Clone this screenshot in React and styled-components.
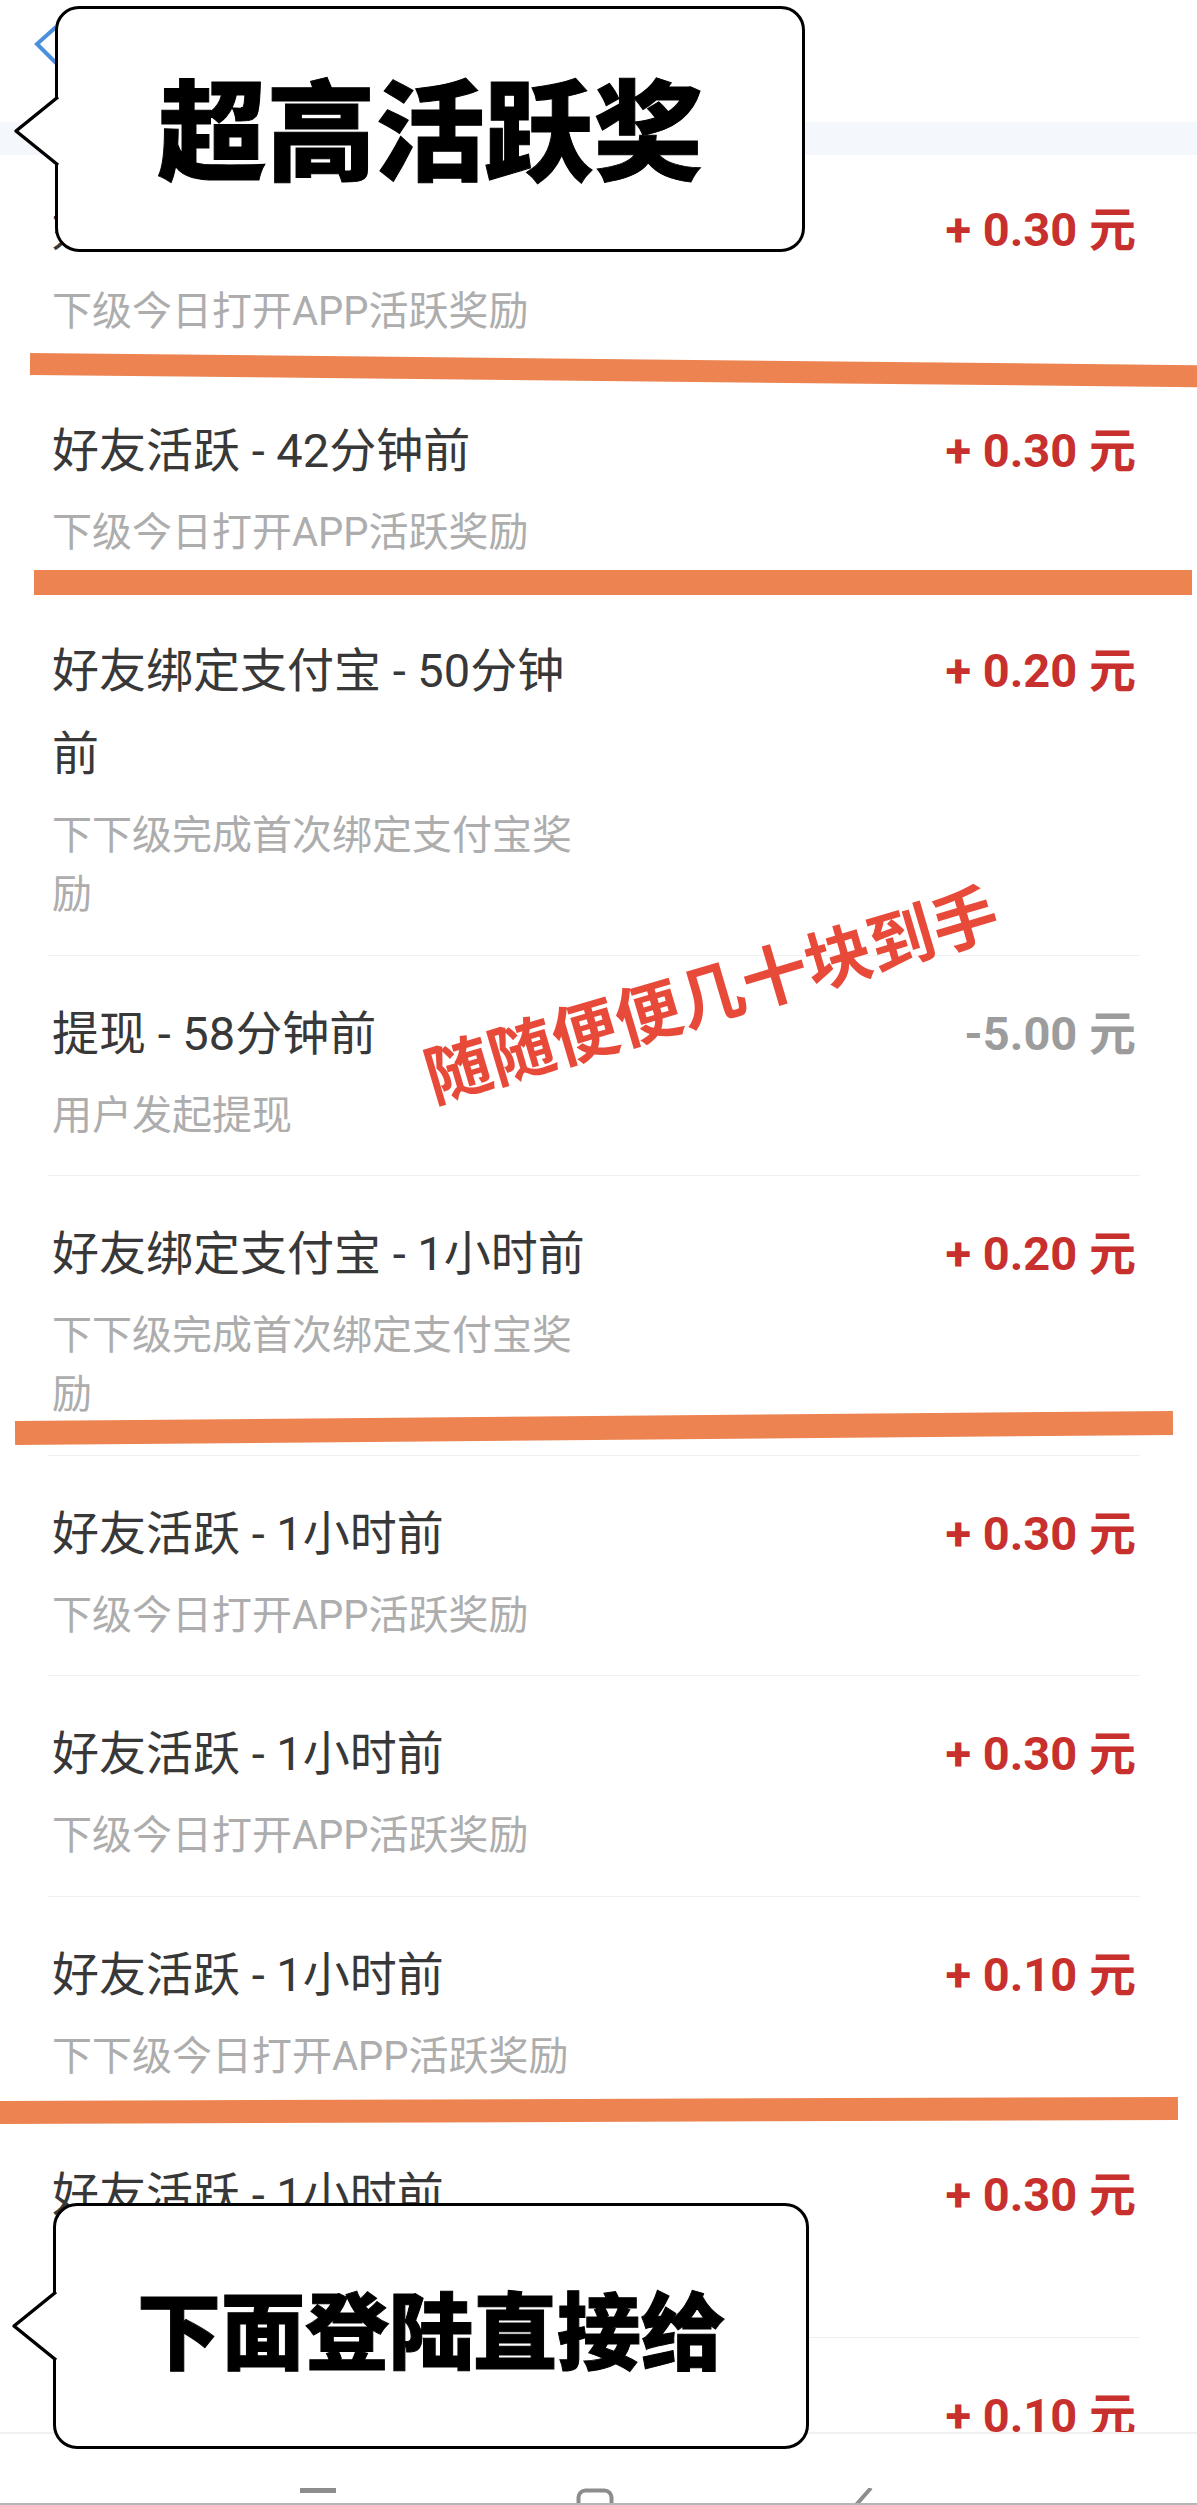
import React from 'react';
import styled, { createGlobalStyle } from 'styled-components';

const Global = createGlobalStyle`
  html, body { margin: 0; padding: 0; background: #fff; }
  * { box-sizing: border-box; }
`;

const Page = styled.div`
  position: relative;
  width: 1197px;
  height: 2505px;
  overflow: hidden;
  background: #fff;
  display: flex;
  flex-direction: column;
  font-family: Roboto, "Noto Sans CJK SC", sans-serif;
`;

const Header = styled.header`
  flex: 0 0 122px;
  padding: 25px 0 0 34px;
  background: #fff;
`;

const Band = styled.div`
  flex: 0 0 33px;
  background: #f4f7fb;
`;

const List = styled.main`
  flex: 0 0 2279px;
  overflow: hidden;
  padding: 0 57px 0 48px;
  border-bottom: 2px solid #f1f1f1;
`;

const Row = styled.article`
  display: flex;
  justify-content: space-between;
  align-items: flex-start;
  padding: 36px 0 30.5px 4px;
  border-bottom: 1px solid #f0f0f0;
  &:first-child { padding-top: 33px; }
`;

const Left = styled.div`
  width: 540px;
  display: flex;
  flex-direction: column;
  gap: 11px;
`;

const Title = styled.div`
  font-size: 47px;
  line-height: 83px;
  color: #383838;
`;

const Sub = styled.div`
  font-size: 40px;
  line-height: 59px;
  color: #adadad;
`;

const Amount = styled.div`
  font-size: 47px;
  line-height: 83px;
  font-weight: 700;
  white-space: nowrap;
  margin-right: 4px;
  color: ${p => (p.$negative ? '#9c9c9c' : '#c7302d')};
`;

const Nav = styled.nav`
  flex: 1;
  display: flex;
  align-items: flex-start;
  gap: 240px;
  padding: 54px 0 0 300px;
  background: #fff;
  overflow: hidden;
  border-bottom: 2px solid #b5b5b5;
`;

const Stroke = styled.div`
  position: absolute;
  left: ${p => p.$x}px;
  top: ${p => p.$y}px;
  width: ${p => p.$w}px;
  height: ${p => p.$h}px;
  background: #ec8350;
  transform-origin: left center;
  transform: rotate(${p => p.$tilt}deg);
`;

const Callout = styled.aside`
  position: absolute;
  left: ${p => p.$x}px;
  top: ${p => p.$y}px;
  width: ${p => p.$w}px;
  height: ${p => p.$h}px;
  background: #fff;
  border: 3px solid #000;
  border-radius: 24px;
  display: flex;
  align-items: center;
  justify-content: center;
`;

const CalloutText = styled.span`
  font-family: "Noto Sans CJK SC", sans-serif;
  font-weight: 900;
  color: #000;
  white-space: nowrap;
  font-size: ${p => p.$size}px;
  -webkit-text-stroke: 1px #000;
  transform: translateY(${p => p.$shift}px);
`;

const Tail = styled.svg`
  position: absolute;
  left: -45px;
  top: ${p => p.$top}px;
  width: 47px;
  overflow: visible;
`;

const Stamp = styled.div`
  position: absolute;
  left: 710px;
  top: 990px;
  transform: translate(-50%, -50%) rotate(-16.5deg);
  font-family: "Noto Sans CJK SC", sans-serif;
  font-weight: 700;
  font-size: 66px;
  line-height: 1;
  white-space: nowrap;
  color: #e84a3a;
`;

const rows = [
  ['好友活跃 - 36分钟前', '下级今日打开APP活跃奖励', '+ 0.30 元'],
  ['好友活跃 - 42分钟前', '下级今日打开APP活跃奖励', '+ 0.30 元'],
  ['好友绑定支付宝 - 50分钟前', '下下级完成首次绑定支付宝奖励', '+ 0.20 元'],
  ['提现 - 58分钟前', '用户发起提现', '-5.00 元', true],
  ['好友绑定支付宝 - 1小时前', '下下级完成首次绑定支付宝奖励', '+ 0.20 元'],
  ['好友活跃 - 1小时前', '下级今日打开APP活跃奖励', '+ 0.30 元'],
  ['好友活跃 - 1小时前', '下级今日打开APP活跃奖励', '+ 0.30 元'],
  ['好友活跃 - 1小时前', '下下级今日打开APP活跃奖励', '+ 0.10 元'],
  ['好友活跃 - 1小时前', '下级今日打开APP活跃奖励', '+ 0.30 元'],
  ['好友活跃 - 1小时前', '下下级今日打开APP活跃奖励', '+ 0.10 元'],
];

const strokes = [
  { x: 30, y: 353, w: 1175, h: 22, tilt: 0.6 },
  { x: 34, y: 570, w: 1158, h: 25, tilt: 0 },
  { x: 15, y: 1421, w: 1158, h: 24, tilt: -0.5 },
  { x: 0, y: 2101, w: 1178, h: 23, tilt: -0.2 },
];

export default function App() {
  return (
    <Page>
      <Global />
      <Header>
        <svg width="24" height="40" viewBox="0 0 24 40" fill="none">
          <path d="M22 2 L3 19 L22 38" stroke="#4a90dc" strokeWidth="4" />
        </svg>
      </Header>
      <Band />
      <List>
        {rows.map(([title, sub, amount, negative], i) => (
          <Row key={i}>
            <Left>
              <Title>{title}</Title>
              <Sub>{sub}</Sub>
            </Left>
            <Amount $negative={negative}>{amount}</Amount>
          </Row>
        ))}
      </List>
      <Nav>
        <svg width="36" height="6" viewBox="0 0 36 6"><rect width="36" height="5" fill="#8d8d8d" /></svg>
        <svg width="38" height="30" viewBox="0 0 38 30" fill="none">
          <rect x="2.5" y="2.5" width="33" height="40" rx="7" stroke="#8d8d8d" strokeWidth="4" />
        </svg>
        <svg width="20" height="20" viewBox="0 0 20 20" fill="none">
          <path d="M17 0 L2 17" stroke="#8d8d8d" strokeWidth="4" />
        </svg>
      </Nav>

      {strokes.map((s, i) => (
        <Stroke key={i} $x={s.x} $y={s.y} $w={s.w} $h={s.h} $tilt={s.tilt} />
      ))}

      <Stamp>随随便便几十块到手</Stamp>

      <Callout $x={55} $y={6} $w={750} $h={246}>
        <Tail $top={86} height="72" viewBox="0 0 47 72" fill="#fff">
          <path d="M45 2 L3 36 L45 70" stroke="#000" strokeWidth="3.5" strokeLinejoin="round" />
        </Tail>
        <CalloutText $size={109} $shift={-5}>超高活跃奖</CalloutText>
      </Callout>

      <Callout $x={53} $y={2203} $w={756} $h={246}>
        <Tail $top={84} height="72" viewBox="0 0 47 72" fill="#fff">
          <path d="M45 2 L3 36 L45 70" stroke="#000" strokeWidth="3.5" strokeLinejoin="round" />
        </Tail>
        <CalloutText $size={84} $shift={0}>下面登陆直接给</CalloutText>
      </Callout>
    </Page>
  );
}
